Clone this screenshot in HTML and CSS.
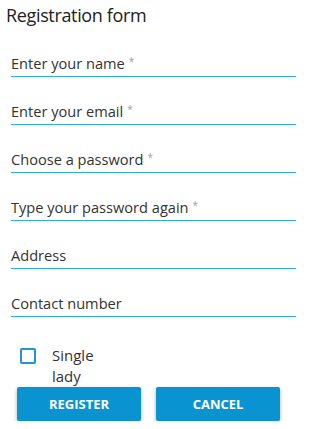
FILE: index.html
```html
<!DOCTYPE html>
<html>
<head>
<meta charset="utf-8">
<link rel="stylesheet" href="styles.css">
</head>
<body>
<div class="page">
  <h1 class="title">Registration form</h1>
  <form class="form">
    <div class="field"><span class="label">Enter your name<span class="req">*</span></span></div>
    <div class="field"><span class="label">Enter your email<span class="req">*</span></span></div>
    <div class="field"><span class="label">Choose a password<span class="req">*</span></span></div>
    <div class="field"><span class="label">Type your password again<span class="req">*</span></span></div>
    <div class="field"><span class="label">Address</span></div>
    <div class="field"><span class="label">Contact number</span></div>
    <div class="check">
      <span class="box"></span>
      <span class="check-label">Single lady</span>
    </div>
    <div class="buttons">
      <button type="button" class="btn">REGISTER</button>
      <button type="button" class="btn">CANCEL</button>
    </div>
  </form>
</div>
</body>
</html>
```
FILE: styles.css
```css
html, body {
  margin: 0;
  padding: 0;
  background: #ffffff;
}
body {
  font-family: "Open Sans", "Noto Sans", sans-serif;
  color: #333333;
}
.page {
  width: 300px;
  padding-top: 3px;
}
.title {
  margin: 0 0 0 6px;
  font-size: 18px;
  line-height: 24px;
  font-weight: 400;
  letter-spacing: -0.35px;
  color: #222222;
}
.form {
  margin: 2px 0 0 0;
}
.field {
  margin-left: 11px;
  width: 285px;
  height: 47px;
  box-sizing: content-box;
  border-bottom: 1px solid #2eaee3;
  display: flex;
  align-items: flex-end;
}
.label {
  font-size: 14.6px;
  line-height: 20px;
  padding-bottom: 3px;
  color: #333333;
}
.req {
  color: #a0a0a0;
  font-size: 10px;
  vertical-align: 4px;
  margin-left: 4px;
}
.check {
  display: flex;
  align-items: flex-start;
  margin: 28px 0 0 20px;
}
.box {
  width: 12px;
  height: 12px;
  border: 2px solid #1f96d3;
  border-radius: 2px;
  margin-top: 3px;
  flex-shrink: 0;
}
.check-label {
  width: 50px;
  margin-left: 16px;
  font-size: 15px;
  line-height: 21px;
  color: #333333;
}
.buttons {
  display: flex;
  gap: 15px;
  margin: 0 0 0 17px;
}
.btn {
  width: 124px;
  height: 34px;
  border: none;
  border-radius: 2px;
  background: #0a93d1;
  color: #ffffff;
  font-family: "Open Sans", "Noto Sans", sans-serif;
  font-weight: 700;
  font-size: 13px;
  box-shadow: 0 2px 4px rgba(0, 0, 0, 0.3);
  padding: 0;
}
```
